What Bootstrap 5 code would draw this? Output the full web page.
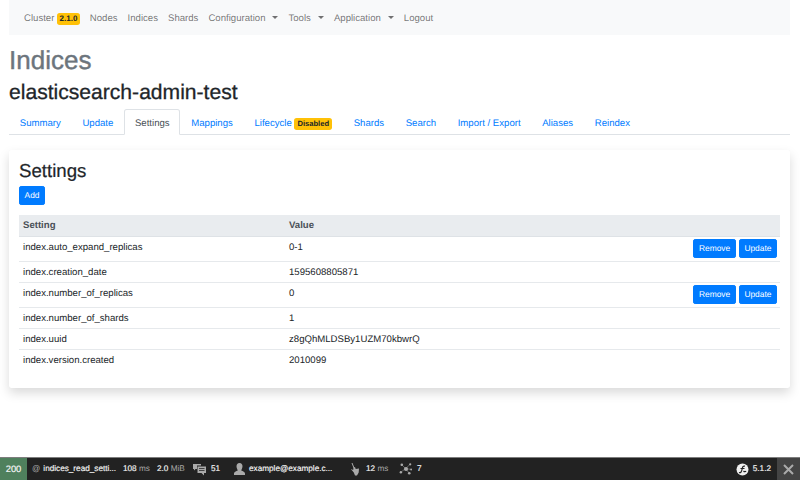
<!DOCTYPE html>
<html lang="en">
<head>
  <meta charset="UTF-8">
  <meta name="viewport" content="width=device-width, initial-scale=1">
  <title>Indices</title>
  <link href="https://cdn.jsdelivr.net/npm/bootstrap@5.3.2/dist/css/bootstrap.min.css" rel="stylesheet">
  <style>
    html, body { height: 480px; overflow: hidden; }
    body {
      font-family: "Liberation Sans", Arial, sans-serif;
      font-size: 9.6px;
      line-height: 1.5;
      color: #212529;
      text-rendering: geometricPrecision;
    }
    .page-wrap { padding: 0 10px 0 9px; height: 457px; }
    .top-bar { height: 35px; padding: 3px 10px 0; }
    .top-bar .nav-link { color: rgba(0,0,0,.55); padding: 0 5px; font-size: 9.6px; white-space: nowrap; }
    .top-bar .dropdown-toggle::after { margin: 0 0 0 7px; vertical-align: 2px; border-width: 3.2px 3px 0; }
    .ver-pill, .off-pill {
      background: #ffc107; color: #212529; font-weight: 700;
      border-radius: 2.7px; display: inline-block; line-height: 1;
    }
    .ver-pill { font-size: 8px; padding: 2px 2.5px; vertical-align: 0; }
    .off-pill { font-size: 7.6px; padding: 2.5px 3px; vertical-align: 0; }
    .page-title { font-size: 26px; font-weight: 500; color: #6c757d; line-height: 32px; margin: 9px 0 0; -webkit-text-stroke: .4px #6c757d; }
    .index-name { font-size: 21.1px; font-weight: 500; line-height: 26px; margin: 4px 0 3px; -webkit-text-stroke: .3px #212529; }
    .tabs-row { height: 26px; padding: 0; }
    .tabs-row .nav-link {
      color: #007bff; font-size: 9.6px; padding: 0 9.8px; line-height: 27px; height: 26px;
      border-radius: 2.7px 2.7px 0 0; white-space: nowrap;
    }
    .tabs-row .nav-link.active { color: #495057; border-color: #dee2e6 #dee2e6 #fff; }
    .settings-box {
      margin-top: 15px; height: 238px; padding: 9px 10px 0 10px;
      box-shadow: 0 5px 11px rgba(0,0,0,.15); border-radius: 2.7px; background: #fff;
    }
    .box-title { font-size: 18.67px; font-weight: 500; line-height: 22px; margin: 1px 0 4px; -webkit-text-stroke: .2px #212529; }
    .blue-btn {
      background: #007bff; border: 1px solid #007bff; color: #fff;
      font-size: 8.4px; line-height: 17px; padding: 0 4.6px; border-radius: 2.1px;
    }
    .blue-btn:hover { background: #007bff; color: #fff; }
    .add-btn { height: 19px; display: block; margin-bottom: 10px; }
    .settings-table { width: 100%; margin: 0; font-size: 9.6px; table-layout: fixed; }
    .settings-table th { background: #e9ecef; color: #495057; font-weight: 700; height: 21px; padding: 2px 4px 0; border-bottom: 1px solid #dee2e6; line-height: 18px; }
    .settings-table td { padding: 1px 4px 0; height: 21px; border-bottom: 1px solid #e6e9ec; vertical-align: top; line-height: 19px; }
    .settings-table tr:last-child td { border-bottom: 0; }
    .settings-table tr.has-btn td { height: 25px; }
    .settings-table .col-a { width: 266px; }
    .settings-table .col-b { width: 300px; }
    .settings-table .row-btns { padding-top: 2px; padding-right: 3px; }
    .btn-pair { gap: 3px; }
    .debug-bar {
      height: 23px; background: #222; border-top: 1px solid #7d7d7d; color: #f5f5f5;
      font-size: 8.2px; line-height: 22px; white-space: nowrap; -webkit-text-stroke: .15px #f5f5f5;
    }
    .status-cell { background: #4f805d; width: 27px; text-align: center; font-size: 9.4px; }
    .muted-unit { color: #aaa; -webkit-text-stroke: 0; }
    .close-cell { background: #444; width: 23px; }
    .bar-route { margin-left: 5px; gap: 3px; width: 91px; }
    .bar-time { width: 34px; }
    .bar-mem { width: 36px; }
    .bar-log { width: 40px; gap: 5px; }
    .bar-user { width: 117px; gap: 3px; }
    .bar-cache { width: 49px; gap: 6px; }
    .bar-nodes { gap: 4px; }
    .bar-sf { gap: 4px; margin-right: 6px; }
  </style>
</head>
<body>

<div class="page-wrap">
  <!-- NAVBAR -->
  <nav class="top-bar bg-light d-flex align-items-center">
    <ul class="nav flex-nowrap">
      <li class="nav-item"><a class="nav-link" href="#">Cluster <span class="ver-pill">2.1.0</span></a></li>
      <li class="nav-item"><a class="nav-link" href="#">Nodes</a></li>
      <li class="nav-item"><a class="nav-link" href="#">Indices</a></li>
      <li class="nav-item"><a class="nav-link" href="#">Shards</a></li>
      <li class="nav-item"><a class="nav-link dropdown-toggle" href="#">Configuration</a></li>
      <li class="nav-item"><a class="nav-link dropdown-toggle" href="#">Tools</a></li>
      <li class="nav-item"><a class="nav-link dropdown-toggle" href="#">Application</a></li>
      <li class="nav-item"><a class="nav-link" href="#">Logout</a></li>
    </ul>
  </nav>

  <h1 class="page-title">Indices</h1>
  <h2 class="index-name">elasticsearch-admin-test</h2>

  <!-- TABS -->
  <ul class="nav nav-tabs tabs-row flex-nowrap">
    <li class="nav-item"><a class="nav-link" href="#">Summary</a></li>
    <li class="nav-item"><a class="nav-link" href="#">Update</a></li>
    <li class="nav-item"><a class="nav-link active" href="#">Settings</a></li>
    <li class="nav-item"><a class="nav-link" href="#">Mappings</a></li>
    <li class="nav-item"><a class="nav-link" href="#">Lifecycle <span class="off-pill">Disabled</span></a></li>
    <li class="nav-item"><a class="nav-link" href="#">Shards</a></li>
    <li class="nav-item"><a class="nav-link" href="#">Search</a></li>
    <li class="nav-item"><a class="nav-link" href="#">Import / Export</a></li>
    <li class="nav-item"><a class="nav-link" href="#">Aliases</a></li>
    <li class="nav-item"><a class="nav-link" href="#">Reindex</a></li>
  </ul>

  <!-- SETTINGS -->
  <section class="settings-box">
    <h3 class="box-title">Settings</h3>
    <a class="btn blue-btn add-btn d-inline-block" href="#">Add</a>
    <table class="settings-table">
      <thead>
        <tr><th class="col-a">Setting</th><th class="col-b">Value</th><th></th></tr>
      </thead>
      <tbody>
        <tr class="has-btn">
          <td>index.auto_expand_replicas</td><td>0-1</td>
          <td class="row-btns"><div class="d-flex justify-content-end btn-pair"><a class="btn blue-btn" href="#">Remove</a><a class="btn blue-btn" href="#">Update</a></div></td>
        </tr>
        <tr><td>index.creation_date</td><td>1595608805871</td><td></td></tr>
        <tr class="has-btn">
          <td>index.number_of_replicas</td><td>0</td>
          <td class="row-btns"><div class="d-flex justify-content-end btn-pair"><a class="btn blue-btn" href="#">Remove</a><a class="btn blue-btn" href="#">Update</a></div></td>
        </tr>
        <tr><td>index.number_of_shards</td><td>1</td><td></td></tr>
        <tr><td>index.uuid</td><td>z8gQhMLDSBy1UZM70kbwrQ</td><td></td></tr>
        <tr><td>index.version.created</td><td>2010099</td><td></td></tr>
      </tbody>
    </table>
  </section>
</div>

<!-- SYMFONY TOOLBAR -->
<footer class="debug-bar d-flex">
  <div class="status-cell">200</div>
  <div class="bar-route d-flex align-items-center"><span class="muted-unit">@</span>indices_read_setti...</div>
  <div class="bar-time">108 <span class="muted-unit">ms</span></div>
  <div class="bar-mem">2.0 <span class="muted-unit">MiB</span></div>
  <div class="bar-log d-flex align-items-center">
    <svg width="13" height="13" viewBox="0 0 13 13"><path fill="#aaa" d="M0 1h8v1.500H4v3.500H2.500L1 7.500V6H0zM4.500 3.500H13V10h-2v2.500L8.500 10h-4z"/><path fill="#222" d="M6 5h5.500v.8H6zM6 7h5.500v.8H6z"/></svg>
    <span>51</span>
  </div>
  <div class="bar-user d-flex align-items-center">
    <svg width="13" height="14" viewBox="0 0 13 14"><path fill="#aaa" d="M6.500 1c2 0 3 1.400 3 3.200S8.500 7.500 8.200 8.400c1.800.7 3.800 1.300 3.800 3V13H1v-1.600c0-1.700 2-2.300 3.800-3C4.500 7.500 3.500 6 3.500 4.200S4.500 1 6.500 1z"/></svg>
    <span>example@example.c...</span>
  </div>
  <div class="bar-cache d-flex align-items-center">
    <svg width="10" height="14" viewBox="0 0 10 14"><path fill="none" stroke="#aaa" stroke-width="1" d="M2 1l2 5"/><path fill="#aaa" d="M3.500 5.500l1.500-.5.700 2 3.300-.5-.3 4L7 13.500H5L3.800 10.500 .8 7l2.400 1z"/></svg>
    <span>12 <span class="muted-unit">ms</span></span>
  </div>
  <div class="bar-nodes d-flex align-items-center">
    <svg width="14" height="14" viewBox="0 0 15 15"><path stroke="#aaa" stroke-width=".5" d="M3 3l4 4M12 2.500L7 7M2 11l5-4M11 12L7 7M13 8L7 7"/><g fill="#aaa"><circle cx="7.500" cy="7.500" r="2.200"/><circle cx="3" cy="3" r="1.400"/><circle cx="12" cy="2.500" r="1.200"/><circle cx="2" cy="11" r="1.300"/><circle cx="11" cy="12" r="1.400"/><circle cx="13" cy="8" r="1"/></g></svg>
    <span>7</span>
  </div>
  <div class="ms-auto d-flex align-items-center bar-sf">
    <svg width="13" height="13" viewBox="0 0 13 13"><circle cx="6.500" cy="6.500" r="6" fill="#f0f0f0"/><path fill="none" stroke="#222" stroke-width="1.200" d="M3 9.500c1.500.8 2.500-.5 3-3s1-3.800 3-3.300M4.500 5.500h4M7.500 8c1 1 2 .8 2.500 0"/></svg>
    <span>5.1.2</span>
  </div>
  <div class="close-cell d-flex align-items-center justify-content-center">
    <svg width="11" height="11" viewBox="0 0 11 11"><path stroke="#aaa" stroke-width="2" d="M1 1l9 9M10 1l-9 9"/></svg>
  </div>
</footer>

<script src="https://cdn.jsdelivr.net/npm/bootstrap@5.3.2/dist/js/bootstrap.bundle.min.js"></script>
</body>
</html>
